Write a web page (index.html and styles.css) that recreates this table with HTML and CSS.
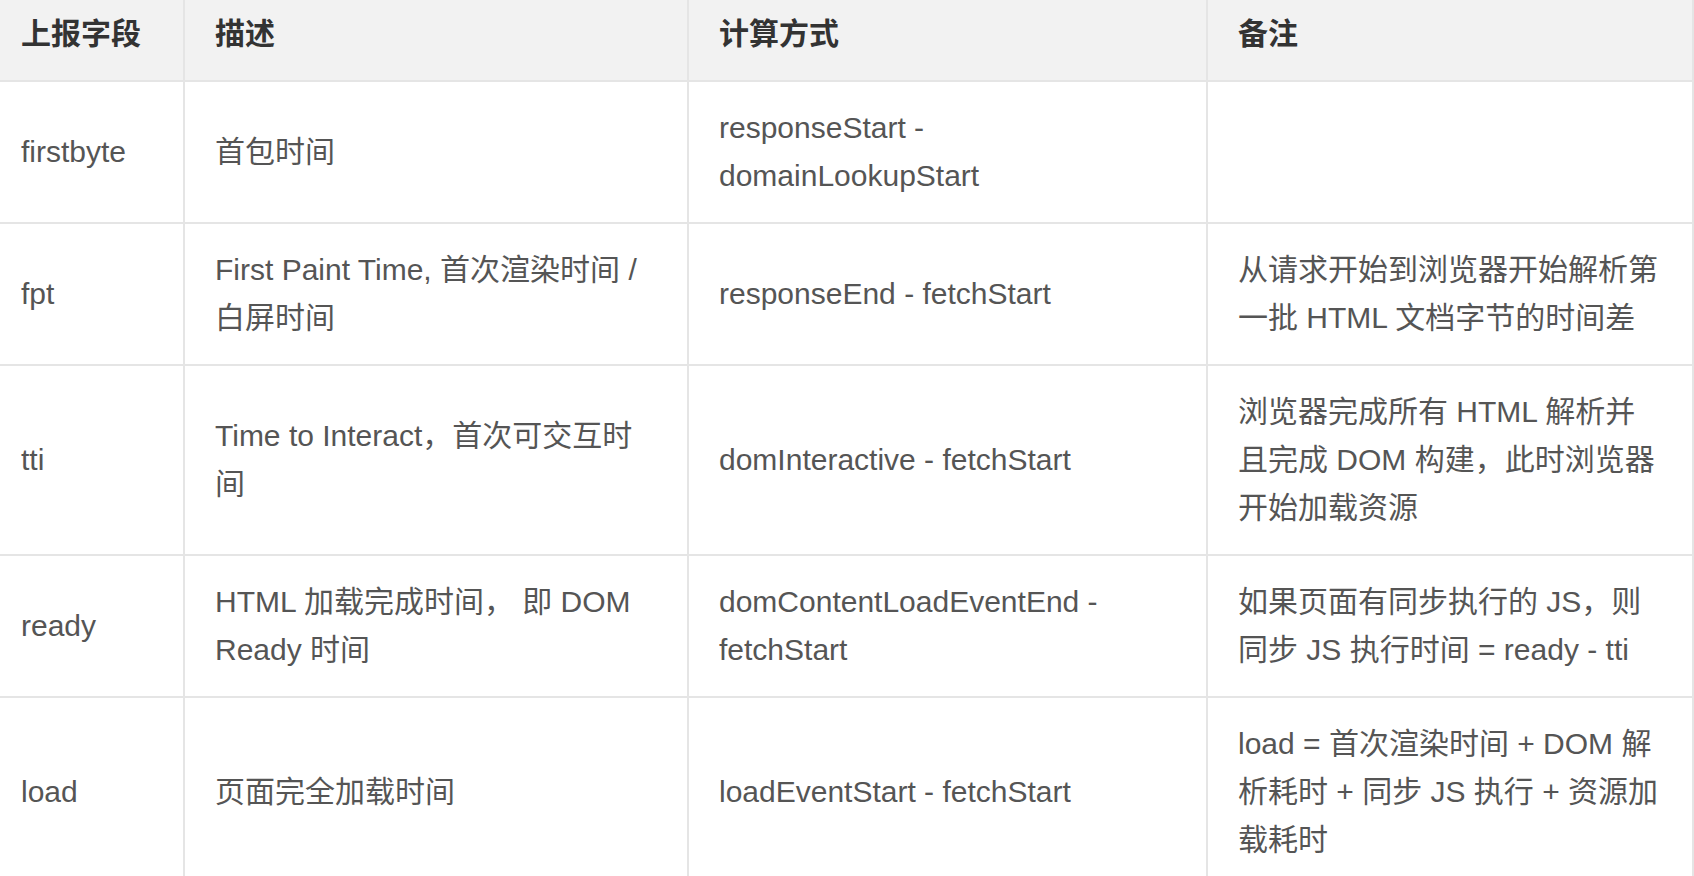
FILE: index.html
```html
<!DOCTYPE html>
<html lang="zh-CN">
<head>
<meta charset="utf-8">
<title>性能上报字段</title>
<link rel="stylesheet" href="styles.css">
</head>
<body>
<div class="table">
  <div class="row head">
    <div class="cell">上报字段</div>
    <div class="cell">描述</div>
    <div class="cell">计算方式</div>
    <div class="cell">备注</div>
  </div>
  <div class="row">
    <div class="cell">firstbyte</div>
    <div class="cell">首包时间</div>
    <div class="cell">responseStart - domainLookupStart</div>
    <div class="cell"></div>
  </div>
  <div class="row">
    <div class="cell">fpt</div>
    <div class="cell">First Paint Time, 首次渲染时间 / 白屏时间</div>
    <div class="cell">responseEnd - fetchStart</div>
    <div class="cell">从请求开始到浏览器开始解析第一批 HTML 文档字节的时间差</div>
  </div>
  <div class="row">
    <div class="cell">tti</div>
    <div class="cell">Time to Interact，首次可交互时间</div>
    <div class="cell">domInteractive - fetchStart</div>
    <div class="cell">浏览器完成所有 HTML 解析并且完成 DOM 构建，此时浏览器开始加载资源</div>
  </div>
  <div class="row">
    <div class="cell">ready</div>
    <div class="cell">HTML 加载完成时间， 即 DOM Ready 时间</div>
    <div class="cell">domContentLoadEventEnd - fetchStart</div>
    <div class="cell">如果页面有同步执行的 JS，则同步 JS 执行时间 = ready - tti</div>
  </div>
  <div class="row">
    <div class="cell">load</div>
    <div class="cell">页面完全加载时间</div>
    <div class="cell">loadEventStart - fetchStart</div>
    <div class="cell">load = 首次渲染时间 + DOM 解析耗时 + 同步 JS 执行 + 资源加载耗时</div>
  </div>
</div>
</body>
</html>
```
FILE: styles.css
```css
html, body {
  margin: 0;
  padding: 0;
  background: #ffffff;
  overflow: hidden;
}

.table {
  width: 1694px;
  font-family: "Liberation Sans", "Noto Sans CJK SC", sans-serif;
  font-size: 30px;
  line-height: 48px;
  color: #555555;
}

.row {
  display: grid;
  grid-template-columns: 185px 504px 519px 486px;
}

.cell {
  display: flex;
  align-items: center;
  padding: 22px 30px;
  border-right: 2px solid #e5e5e5;
  border-bottom: 2px solid #e5e5e5;
  min-height: 48px;
}

.cell:first-child {
  padding-left: 21px;
}

.head .cell {
  align-items: flex-start;
  padding-top: 10px;
  padding-bottom: 22px;
  background: #f2f2f2;
  color: #333333;
  font-weight: bold;
}
```
